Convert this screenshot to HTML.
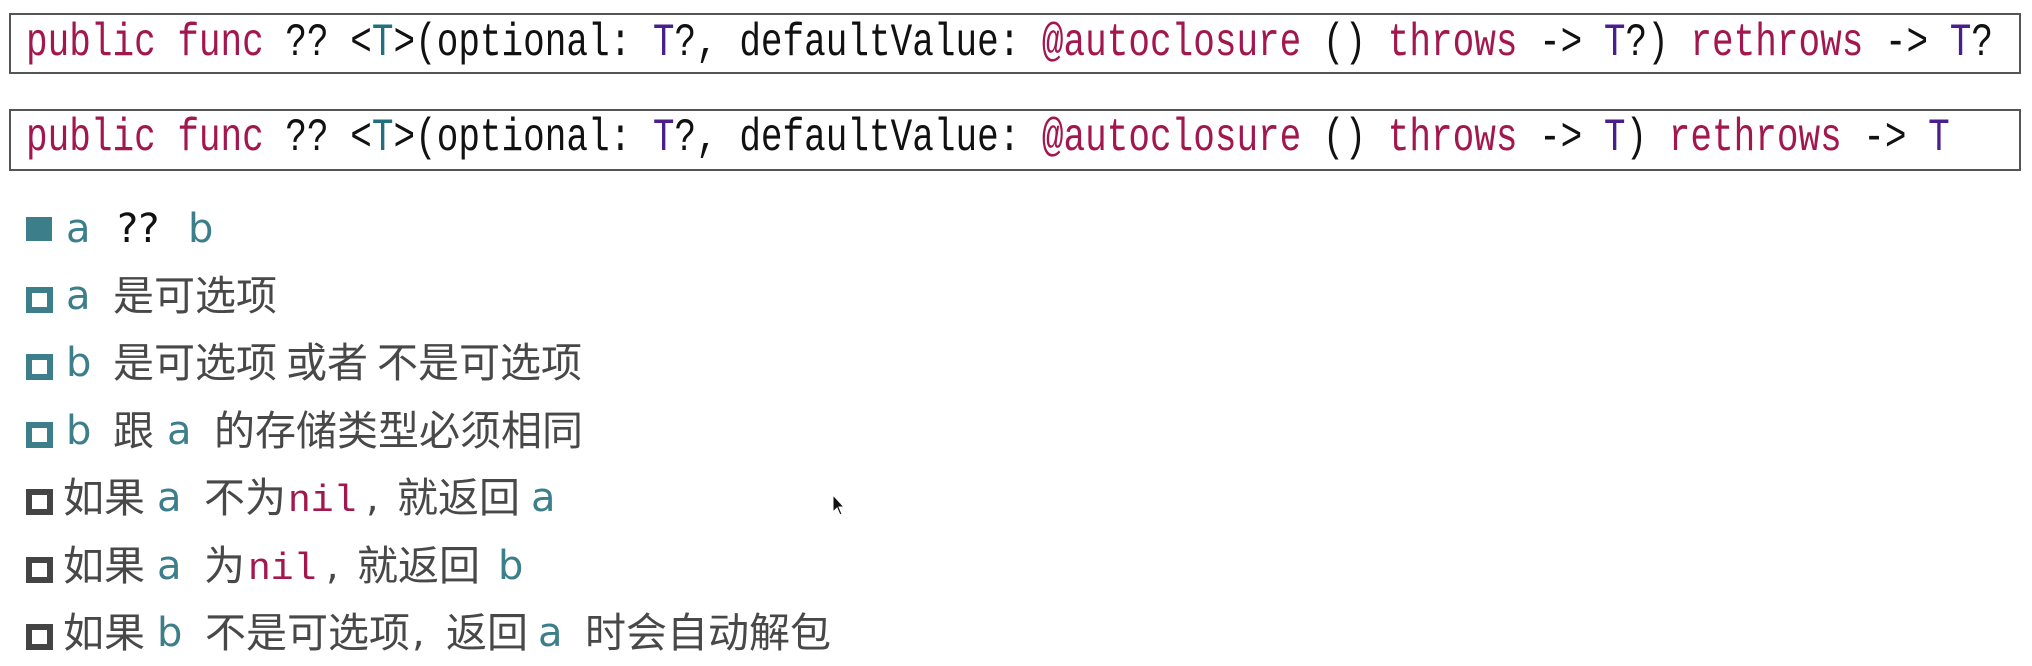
<!DOCTYPE html>
<html><head><meta charset="utf-8"><style>
html,body{margin:0;padding:0;background:#fff;}
body{width:2032px;height:666px;position:relative;overflow:hidden;}
.box{position:absolute;left:9px;width:2012px;border:2px solid #555;box-sizing:border-box;}
.code{position:absolute;left:26px;font-family:"Liberation Mono",monospace;font-size:46px;line-height:1;white-space:pre;transform:scaleX(0.783);transform-origin:0 0;color:#111;}
.k{color:#a3174f}.t{color:#4a1f8c}.g{color:#22707e}
.s{position:absolute;line-height:1;white-space:pre;}
.l{font-family:"DejaVu Sans",sans-serif;font-size:40px;}
.c{font-family:"Noto Sans CJK SC",sans-serif;font-size:41px;color:#484848;}
.m{font-family:"Liberation Mono",monospace;font-size:38px;color:#a3174f;}
.tl{color:#3c7f8b}
.sq{position:absolute;left:26px;width:27px;height:26px;box-sizing:border-box;border:6px solid #3c7f8b;}
.sq.d{border-color:#444;}
.sq.f{background:#3c7f8b;}
</style></head><body>
<div class="box" style="top:13px;height:61px"></div>
<div class="box" style="top:109px;height:62px"></div>
<div class="code" style="top:20px"><span class="k">public</span> <span class="k">func</span> ?? &lt;<span class="g">T</span>&gt;(optional: <span class="t">T</span>?, defaultValue: <span class="k">@autoclosure</span> () <span class="k">throws</span> -&gt; <span class="t">T</span>?) <span class="k">rethrows</span> -&gt; <span class="t">T</span>?</div>
<div class="code" style="top:115px"><span class="k">public</span> <span class="k">func</span> ?? &lt;<span class="g">T</span>&gt;(optional: <span class="t">T</span>?, defaultValue: <span class="k">@autoclosure</span> () <span class="k">throws</span> -&gt; <span class="t">T</span>) <span class="k">rethrows</span> -&gt; <span class="t">T</span></div>

<div class="sq f" style="top:217px;height:24px;width:26px"></div>
<span class="s l tl" style="left:66px;top:209px">a</span>
<span class="s l" style="left:117px;top:209px;color:#111">??</span>
<span class="s l tl" style="left:188px;top:209px">b</span>

<div class="sq" style="top:287px"></div>
<span class="s l tl" style="left:66px;top:276px">a</span>
<span class="s c" style="left:113px;top:272px">是可选项</span>

<div class="sq" style="top:354px"></div>
<span class="s l tl" style="left:66px;top:343px">b</span>
<span class="s c" style="left:113px;top:339px">是可选项</span>
<span class="s c" style="left:286px;top:339px">或者</span>
<span class="s c" style="left:377px;top:339px">不是可选项</span>

<div class="sq" style="top:422px"></div>
<span class="s l tl" style="left:66px;top:411px">b</span>
<span class="s c" style="left:113px;top:407px">跟</span>
<span class="s l tl" style="left:167px;top:411px">a</span>
<span class="s c" style="left:214px;top:407px">的存储类型必须相同</span>

<div class="sq d" style="top:489px"></div>
<span class="s c" style="left:63px;top:474px">如果</span>
<span class="s l tl" style="left:157px;top:478px">a</span>
<span class="s c" style="left:204px;top:474px">不为</span>
<span class="s m" style="left:288px;top:483px">nil</span>
<span class="s l" style="left:366px;top:478px;color:#484848">,</span>
<span class="s c" style="left:397px;top:474px">就返回</span>
<span class="s l tl" style="left:531px;top:478px">a</span>

<div class="sq d" style="top:557px"></div>
<span class="s c" style="left:63px;top:542px">如果</span>
<span class="s l tl" style="left:157px;top:546px">a</span>
<span class="s c" style="left:204px;top:542px">为</span>
<span class="s m" style="left:248px;top:551px">nil</span>
<span class="s l" style="left:326px;top:546px;color:#484848">,</span>
<span class="s c" style="left:357px;top:542px">就返回</span>
<span class="s l tl" style="left:498px;top:546px">b</span>

<div class="sq d" style="top:624px"></div>
<span class="s c" style="left:63px;top:609px">如果</span>
<span class="s l tl" style="left:157px;top:613px">b</span>
<span class="s c" style="left:205px;top:609px">不是可选项</span>
<span class="s l" style="left:412px;top:613px;color:#484848">,</span>
<span class="s c" style="left:446px;top:609px">返回</span>
<span class="s l tl" style="left:538px;top:613px">a</span>
<span class="s c" style="left:585px;top:609px">时会自动解包</span>

<svg style="position:absolute;left:832px;top:494px" width="16" height="24" viewBox="0 0 16 24"><path d="M1 1 L1 18 L5 14 L8 21 L10 20 L7 13 L12 13 Z" fill="#111" stroke="#fff" stroke-width="1"/></svg>
</body></html>
